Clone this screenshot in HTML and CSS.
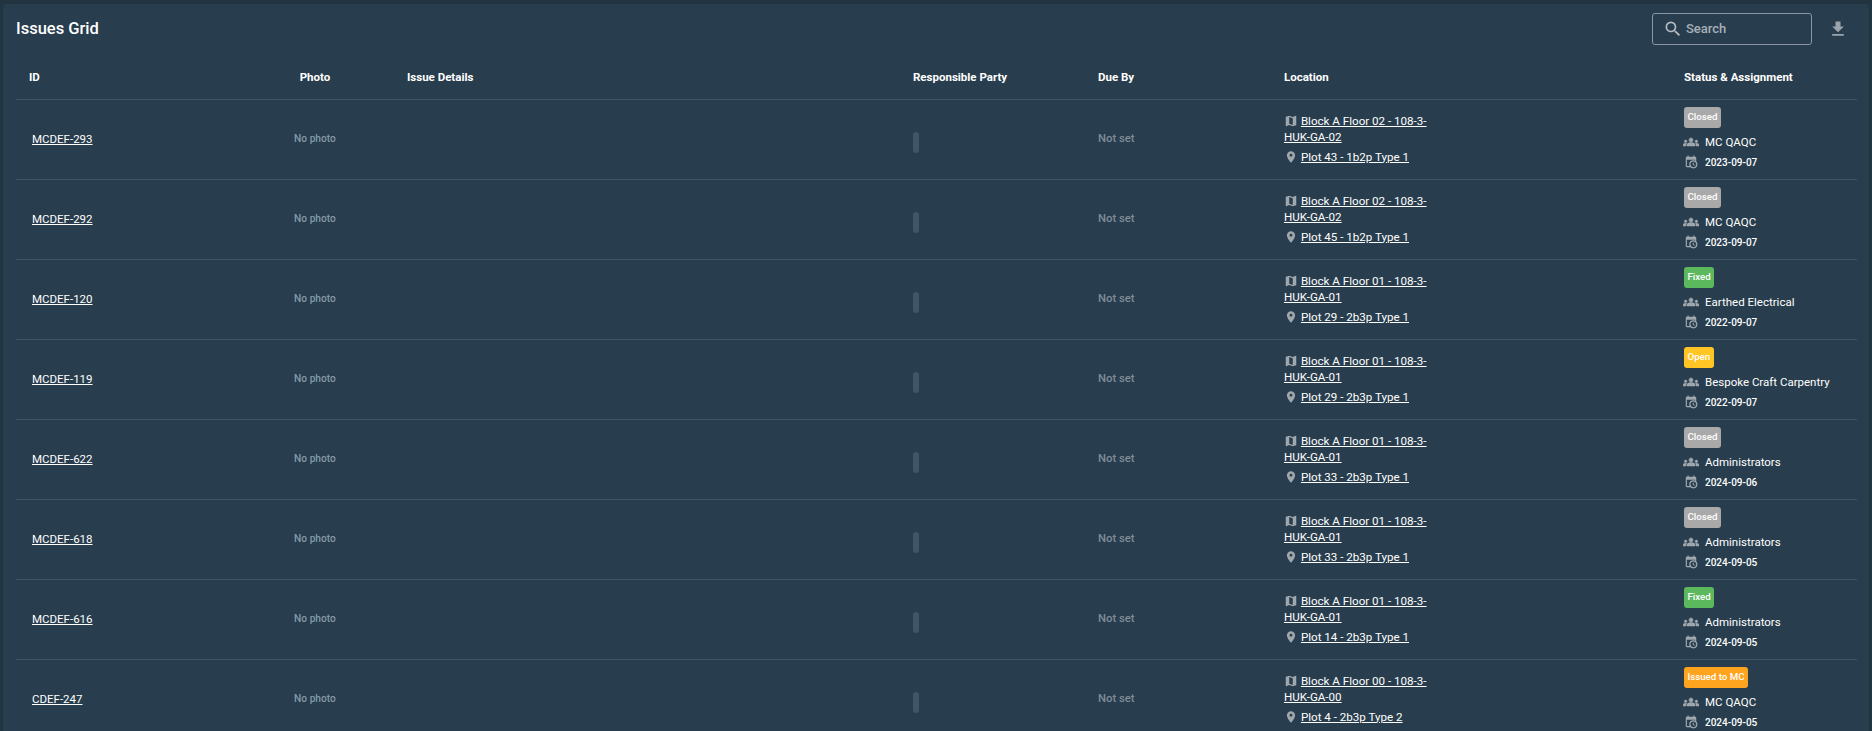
FILE: index.html
```html
<!DOCTYPE html>
<html lang="en">
<head>
    <meta charset="UTF-8">
    <title>Issues Grid</title>
    <link rel="stylesheet" href="styles.css">
</head>
<body>
    <svg class="sprite" xmlns="http://www.w3.org/2000/svg">
        <symbol id="i-search" viewBox="0 0 24 24"><path d="M15.5 14h-.79l-.28-.27A6.47 6.47 0 0 0 16 9.5 6.5 6.5 0 1 0 9.5 16c1.61 0 3.09-.59 4.23-1.57l.27.28v.79l5 4.99L20.49 19l-4.99-5zm-6 0C7.01 14 5 11.99 5 9.5S7.01 5 9.5 5 14 7.01 14 9.5 11.99 14 9.5 14z"/></symbol>
        <symbol id="i-download" viewBox="0 0 24 24"><path d="M19 9h-4V3H9v6H5l7 7 7-7zM5 18v2h14v-2H5z"/></symbol>
        <symbol id="i-map" viewBox="0 0 24 24"><path d="M20.5 3l-.16.03L15 5.1 9 3 3.36 4.9c-.21.07-.36.25-.36.48V20.5c0 .28.22.5.5.5l.16-.03L9 18.9l6 2.1 5.64-1.9c.21-.07.36-.25.36-.48V3.5c0-.28-.22-.5-.5-.5zM15 19l-6-2.11V5l6 2.11V19z"/></symbol>
        <symbol id="i-place" viewBox="0 0 24 24"><path d="M12 2C8.13 2 5 5.13 5 9c0 5.25 7 13 7 13s7-7.75 7-13c0-3.87-3.13-7-7-7zm0 9.5a2.5 2.5 0 0 1 0-5 2.5 2.5 0 0 1 0 5z"/></symbol>
        <symbol id="i-groups" viewBox="0 0 24 24"><path d="M12 12.75c1.63 0 3.07.39 4.24.9 1.08.48 1.76 1.56 1.76 2.73V18H6v-1.61c0-1.18.68-2.26 1.76-2.73 1.17-.52 2.61-.91 4.24-.91zM4 13c1.1 0 2-.9 2-2s-.9-2-2-2-2 .9-2 2 .9 2 2 2zm1.13 1.1c-.37-.06-.74-.1-1.13-.1-.99 0-1.93.21-2.78.58C.48 14.9 0 15.62 0 16.43V18h4.5v-1.61c0-.83.23-1.61.63-2.29zM20 13c1.1 0 2-.9 2-2s-.9-2-2-2-2 .9-2 2 .9 2 2 2zm4 3.43c0-.81-.48-1.53-1.22-1.85-.85-.37-1.79-.58-2.78-.58-.39 0-.76.04-1.13.1.4.68.63 1.46.63 2.29V18H24v-1.57zM12 6c1.66 0 3 1.34 3 3s-1.34 3-3 3-3-1.34-3-3 1.34-3 3-3z"/></symbol>
        <symbol id="i-date" viewBox="0 0 24 24"><path d="M15 13h1.5v2.82l2.44 1.41-.75 1.3L15 16.69V13m4-5H5v11h4.67C9.24 18.09 9 17.07 9 16a7 7 0 0 1 7-7c1.07 0 2.09.24 3 .67V8M5 21c-1.11 0-2-.9-2-2V5c0-1.11.89-2 2-2h1V1h2v2h8V1h2v2h1a2 2 0 0 1 2 2v6.1c1.24 1.26 2 2.99 2 4.9a7 7 0 0 1-7 7c-1.91 0-3.64-.76-4.9-2H5m11-9.85A4.85 4.85 0 0 0 11.15 16c0 2.68 2.17 4.85 4.85 4.85A4.85 4.85 0 0 0 20.85 16c0-2.68-2.17-4.85-4.85-4.85z"/></symbol>
    </svg>

    <div class="card">
        <div class="toolbar">
            <h1>Issues Grid</h1>
            <div class="tools">
                <div class="search">
                    <svg class="search-icon"><use href="#i-search"/></svg>
                    <span>Search</span>
                </div>
                <svg class="download"><use href="#i-download"/></svg>
            </div>
        </div>

        <table class="grid">
            <colgroup>
                <col class="c-id"><col class="c-photo"><col class="c-details"><col class="c-party"><col class="c-due"><col class="c-loc"><col class="c-status">
            </colgroup>
            <thead>
                <tr>
                    <th>ID</th>
                    <th class="center">Photo</th>
                    <th>Issue Details</th>
                    <th>Responsible Party</th>
                    <th>Due By</th>
                    <th>Location</th>
                    <th>Status &amp; Assignment</th>
                </tr>
            </thead>
            <tbody>
                <tr>
                    <td class="id"><a href="#">MCDEF-293</a></td>
                    <td class="center nophoto">No photo</td>
                    <td></td>
                    <td><span class="pill"></span></td>
                    <td class="muted">Not set</td>
                    <td class="loc">
                        <div class="loc-line"><svg class="ico"><use href="#i-map"/></svg> <a href="#">Block A Floor 02 - 108-3-HUK-GA-02</a></div>
                        <div class="loc-line"><svg class="ico"><use href="#i-place"/></svg> <a href="#">Plot 43 - 1b2p Type 1</a></div>
                    </td>
                    <td class="status">
                        <span class="badge closed">Closed</span>
                        <div class="meta"><svg class="ico-people"><use href="#i-groups"/></svg>MC QAQC</div>
                        <div class="meta date"><svg class="ico-date"><use href="#i-date"/></svg>2023-09-07</div>
                    </td>
                </tr>
                <tr>
                    <td class="id"><a href="#">MCDEF-292</a></td>
                    <td class="center nophoto">No photo</td>
                    <td></td>
                    <td><span class="pill"></span></td>
                    <td class="muted">Not set</td>
                    <td class="loc">
                        <div class="loc-line"><svg class="ico"><use href="#i-map"/></svg> <a href="#">Block A Floor 02 - 108-3-HUK-GA-02</a></div>
                        <div class="loc-line"><svg class="ico"><use href="#i-place"/></svg> <a href="#">Plot 45 - 1b2p Type 1</a></div>
                    </td>
                    <td class="status">
                        <span class="badge closed">Closed</span>
                        <div class="meta"><svg class="ico-people"><use href="#i-groups"/></svg>MC QAQC</div>
                        <div class="meta date"><svg class="ico-date"><use href="#i-date"/></svg>2023-09-07</div>
                    </td>
                </tr>
                <tr>
                    <td class="id"><a href="#">MCDEF-120</a></td>
                    <td class="center nophoto">No photo</td>
                    <td></td>
                    <td><span class="pill"></span></td>
                    <td class="muted">Not set</td>
                    <td class="loc">
                        <div class="loc-line"><svg class="ico"><use href="#i-map"/></svg> <a href="#">Block A Floor 01 - 108-3-HUK-GA-01</a></div>
                        <div class="loc-line"><svg class="ico"><use href="#i-place"/></svg> <a href="#">Plot 29 - 2b3p Type 1</a></div>
                    </td>
                    <td class="status">
                        <span class="badge fixed">Fixed</span>
                        <div class="meta"><svg class="ico-people"><use href="#i-groups"/></svg>Earthed Electrical</div>
                        <div class="meta date"><svg class="ico-date"><use href="#i-date"/></svg>2022-09-07</div>
                    </td>
                </tr>
                <tr>
                    <td class="id"><a href="#">MCDEF-119</a></td>
                    <td class="center nophoto">No photo</td>
                    <td></td>
                    <td><span class="pill"></span></td>
                    <td class="muted">Not set</td>
                    <td class="loc">
                        <div class="loc-line"><svg class="ico"><use href="#i-map"/></svg> <a href="#">Block A Floor 01 - 108-3-HUK-GA-01</a></div>
                        <div class="loc-line"><svg class="ico"><use href="#i-place"/></svg> <a href="#">Plot 29 - 2b3p Type 1</a></div>
                    </td>
                    <td class="status">
                        <span class="badge open">Open</span>
                        <div class="meta"><svg class="ico-people"><use href="#i-groups"/></svg>Bespoke Craft Carpentry</div>
                        <div class="meta date"><svg class="ico-date"><use href="#i-date"/></svg>2022-09-07</div>
                    </td>
                </tr>
                <tr>
                    <td class="id"><a href="#">MCDEF-622</a></td>
                    <td class="center nophoto">No photo</td>
                    <td></td>
                    <td><span class="pill"></span></td>
                    <td class="muted">Not set</td>
                    <td class="loc">
                        <div class="loc-line"><svg class="ico"><use href="#i-map"/></svg> <a href="#">Block A Floor 01 - 108-3-HUK-GA-01</a></div>
                        <div class="loc-line"><svg class="ico"><use href="#i-place"/></svg> <a href="#">Plot 33 - 2b3p Type 1</a></div>
                    </td>
                    <td class="status">
                        <span class="badge closed">Closed</span>
                        <div class="meta"><svg class="ico-people"><use href="#i-groups"/></svg>Administrators</div>
                        <div class="meta date"><svg class="ico-date"><use href="#i-date"/></svg>2024-09-06</div>
                    </td>
                </tr>
                <tr>
                    <td class="id"><a href="#">MCDEF-618</a></td>
                    <td class="center nophoto">No photo</td>
                    <td></td>
                    <td><span class="pill"></span></td>
                    <td class="muted">Not set</td>
                    <td class="loc">
                        <div class="loc-line"><svg class="ico"><use href="#i-map"/></svg> <a href="#">Block A Floor 01 - 108-3-HUK-GA-01</a></div>
                        <div class="loc-line"><svg class="ico"><use href="#i-place"/></svg> <a href="#">Plot 33 - 2b3p Type 1</a></div>
                    </td>
                    <td class="status">
                        <span class="badge closed">Closed</span>
                        <div class="meta"><svg class="ico-people"><use href="#i-groups"/></svg>Administrators</div>
                        <div class="meta date"><svg class="ico-date"><use href="#i-date"/></svg>2024-09-05</div>
                    </td>
                </tr>
                <tr>
                    <td class="id"><a href="#">MCDEF-616</a></td>
                    <td class="center nophoto">No photo</td>
                    <td></td>
                    <td><span class="pill"></span></td>
                    <td class="muted">Not set</td>
                    <td class="loc">
                        <div class="loc-line"><svg class="ico"><use href="#i-map"/></svg> <a href="#">Block A Floor 01 - 108-3-HUK-GA-01</a></div>
                        <div class="loc-line"><svg class="ico"><use href="#i-place"/></svg> <a href="#">Plot 14 - 2b3p Type 1</a></div>
                    </td>
                    <td class="status">
                        <span class="badge fixed">Fixed</span>
                        <div class="meta"><svg class="ico-people"><use href="#i-groups"/></svg>Administrators</div>
                        <div class="meta date"><svg class="ico-date"><use href="#i-date"/></svg>2024-09-05</div>
                    </td>
                </tr>
                <tr>
                    <td class="id"><a href="#">CDEF-247</a></td>
                    <td class="center nophoto">No photo</td>
                    <td></td>
                    <td><span class="pill"></span></td>
                    <td class="muted">Not set</td>
                    <td class="loc">
                        <div class="loc-line"><svg class="ico"><use href="#i-map"/></svg> <a href="#">Block A Floor 00 - 108-3-HUK-GA-00</a></div>
                        <div class="loc-line"><svg class="ico"><use href="#i-place"/></svg> <a href="#">Plot 4 - 2b3p Type 2</a></div>
                    </td>
                    <td class="status">
                        <span class="badge issued">Issued to MC</span>
                        <div class="meta"><svg class="ico-people"><use href="#i-groups"/></svg>MC QAQC</div>
                        <div class="meta date"><svg class="ico-date"><use href="#i-date"/></svg>2024-09-05</div>
                    </td>
                </tr>
            </tbody>
        </table>
    </div>
</body>
</html>
```

FILE: styles.css
```css
html, body {
    height: 100%;
}

body {
    font-family: Roboto, "Liberation Sans", sans-serif;
    margin: 0;
    padding: 4px 3px 0;
    box-sizing: border-box;
    background-color: #22343f;
    color: #fff;
    overflow: hidden;
}

.sprite {
    display: none;
}

.card {
    background-color: #283d4d;
    border-radius: 4px 4px 0 0;
    padding: 0 12px 0 13px;
    height: 760px;
}

.toolbar {
    display: flex;
    justify-content: space-between;
    align-items: center;
    height: 48px;
    padding-top: 1px;
    box-sizing: border-box;
}

h1 {
    font-size: 16.5px;
    font-weight: 500;
    margin: 0;
}

.tools {
    display: flex;
    align-items: center;
    margin-right: 4px;
}

.search {
    display: flex;
    align-items: center;
    width: 160px;
    height: 32px;
    box-sizing: border-box;
    padding-left: 10px;
    border: 1px solid #8a97a3;
    border-radius: 3px;
    color: #a7b0b8;
    font-size: 13px;
    font-weight: 500;
}

.search-icon {
    width: 20px;
    height: 20px;
    margin-right: 3px;
    fill: #b4bbc1;
}

.download {
    width: 20px;
    height: 20px;
    margin: 0 5px 0 16px;
    fill: #9aa4ad;
}

.grid {
    width: 1841px;
    border-collapse: collapse;
    table-layout: fixed;
}

.c-id { width: 218px; }
.c-photo { width: 160px; }
.c-details { width: 506px; }
.c-party { width: 185px; }
.c-due { width: 186px; }
.c-loc { width: 400px; }
.c-status { width: 186px; }

th {
    height: 45px;
    padding: 2px 13px 0;
    font-size: 11.5px;
    font-weight: 700;
    text-align: left;
    border-bottom: 1px solid #425566;
}

td {
    height: 77px;
    padding: 0 13px 2px;
    font-size: 11px;
    vertical-align: middle;
    border-bottom: 1px solid #425566;
}

.center {
    text-align: center;
    padding-left: 15px;
}

a {
    color: #fff;
    font-weight: 450;
}

.id {
    padding-left: 16px;
    font-size: 11.5px;
}

.nophoto {
    font-size: 10.2px;
    font-weight: 500;
    color: #839aa6;
}

.muted {
    color: #7f8c97;
    font-weight: 500;
    font-size: 11.3px;
}

.pill {
    display: block;
    width: 6px;
    height: 21px;
    margin-top: 7px;
    border-radius: 3px;
    background-color: #425566;
}

.loc-line {
    width: 150px;
    line-height: 16px;
    font-size: 11.6px;
    margin-bottom: 4px;
}

.loc-line:last-child {
    margin-bottom: 0;
}

.ico {
    width: 14px;
    height: 14px;
    fill: #a0a8ae;
    vertical-align: -3px;
}

.status {
    padding: 0 13px;
}

.badge {
    display: inline-block;
    height: 21px;
    line-height: 19px;
    padding: 0 3.5px;
    box-sizing: border-box;
    border-radius: 3px;
    font-size: 9.7px;
    font-weight: 500;
    margin-bottom: 4px;
}

.closed { background-color: #a9a9a9; }
.fixed { background-color: #5cb85c; }
.open { background-color: #ffc524; }
.issued { background-color: #ffa41f; }

.meta {
    display: flex;
    align-items: center;
    height: 20px;
    font-size: 11.5px;
    font-weight: 450;
}

.ico-people {
    width: 16px;
    height: 16px;
    fill: #a0a8ae;
    stroke: #a0a8ae;
    stroke-width: 0.8;
    margin-left: -1px;
    margin-right: 6px;
    flex-shrink: 0;
}

.ico-date {
    width: 14px;
    height: 14px;
    fill: #a0a8ae;
    margin-right: 7px;
    flex-shrink: 0;
}

.date {
    font-size: 10px;
    font-weight: 500;
}
```
